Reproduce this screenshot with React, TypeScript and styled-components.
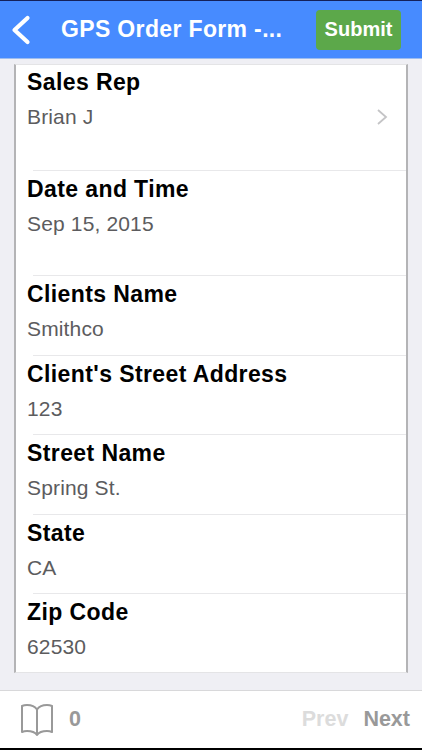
import styled, { createGlobalStyle } from 'styled-components';

const GlobalStyle = createGlobalStyle`
    html, body {
        margin: 0;
        padding: 0;
        background: #000;
    }
    body {
        font-family: "Liberation Sans", Arial, sans-serif;
    }
`;

const fields = [
    { label: 'Sales Rep', value: 'Brian J', tall: true, arrow: true },
    { label: 'Date and Time', value: 'Sep 15, 2015', tall: true },
    { label: 'Clients Name', value: 'Smithco' },
    { label: "Client's Street Address", value: '123' },
    { label: 'Street Name', value: 'Spring St.' },
    { label: 'State', value: 'CA' },
    { label: 'Zip Code', value: '62530' },
];

export default function App() {
    return (
        <Screen>
            <GlobalStyle />
            <TopEdge />
            <Header>
                <BackButton aria-label="Back">
                    <svg width="20" height="30" viewBox="0 0 20 30" fill="none">
                        <path d="M16.5 3 L3.5 15 L16.5 27" stroke="#fff" strokeWidth="4.2" strokeLinecap="round" strokeLinejoin="round" />
                    </svg>
                </BackButton>
                <Title>GPS Order Form -...</Title>
                <SubmitButton>Submit</SubmitButton>
            </Header>
            <Content>
                <Card>
                    {fields.map((field, index) => (
                        <Field key={field.label} $tall={field.tall} $first={index === 0}>
                            <Label>{field.label}</Label>
                            <ValueRow>
                                <Value>{field.value}</Value>
                                {field.arrow && (
                                    <svg width="12" height="18" viewBox="0 0 12 18" fill="none">
                                        <path d="M2 2 L10 9 L2 16" stroke="#c4c4c6" strokeWidth="1.8" />
                                    </svg>
                                )}
                            </ValueRow>
                        </Field>
                    ))}
                </Card>
            </Content>
            <Footer>
                <Counter>
                    <svg width="34" height="32" viewBox="0 0 34 32" fill="none">
                        <path
                            d="M17 5.5 C15 2.5 11 1 7 1 C5 1 3.5 1.3 2 2 V28 C3.5 27.3 5 27 7 27 C11 27 15 28 17 31 C19 28 23 27 27 27 C29 27 30.5 27.3 32 28 V2 C30.5 1.3 29 1 27 1 C23 1 19 2.5 17 5.5 Z M17 5.5 V31"
                            stroke="#999"
                            strokeWidth="2"
                            strokeLinejoin="round"
                        />
                    </svg>
                    <Count>0</Count>
                </Counter>
                <Pager>
                    <PageLink $disabled>Prev</PageLink>
                    <PageLink>Next</PageLink>
                </Pager>
            </Footer>
        </Screen>
    );
}

const Screen = styled.div`
    width: 422px;
    height: 750px;
    display: flex;
    flex-direction: column;
    overflow: hidden;
    background: #efeff4;
`;

const TopEdge = styled.div`
    height: 1px;
    flex-shrink: 0;
    background: #14205a;
`;

const Header = styled.header`
    height: 58px;
    flex-shrink: 0;
    display: flex;
    align-items: center;
    padding: 0 21px 0 11px;
    background: #478bff;
    border-bottom: 1px solid #9dbdf0;
    box-sizing: border-box;
`;

const BackButton = styled.div`
    width: 20px;
    height: 30px;
    display: flex;
    margin-right: 30px;
`;

const Title = styled.div`
    flex: 1;
    color: #fff;
    font-size: 23px;
    font-weight: 700;
    letter-spacing: 0.35px;
    white-space: nowrap;
`;

const SubmitButton = styled.div`
    width: 85px;
    height: 40px;
    display: flex;
    align-items: center;
    justify-content: center;
    background: #5ca84a;
    border-radius: 4px;
    color: #fff;
    font-size: 20px;
    font-weight: 700;
`;

const Content = styled.main`
    flex: 1;
    padding: 5px 14px 17px;
    min-height: 0;
    display: flex;
`;

const Card = styled.div`
    flex: 1;
    background: #fff;
    border-left: 2px solid #b4b4b6;
    border-right: 2px solid #b4b4b6;
    border-top: 1px solid #e4e4e6;
    border-bottom: 1px solid #e4e4e6;
    padding-left: 11px;
`;

const Field = styled.div<{ $tall?: boolean; $first?: boolean }>`
    height: ${(props) => (props.$first ? '105px' : props.$tall ? '105.4px' : '79.4px')};
    box-sizing: border-box;
    padding-top: ${(props) => (props.$first ? '3px' : '4px')};
    border-top: ${(props) => (props.$first ? 'none' : '1px solid #e8e8ea')};
    margin-left: ${(props) => (props.$first ? '0' : '6px')};
    & > * {
        margin-left: ${(props) => (props.$first ? '0' : '-6px')};
    }
`;

const Label = styled.div`
    color: #000;
    font-size: 23px;
    font-weight: 700;
    letter-spacing: 0.4px;
    line-height: 28px;
`;

const ValueRow = styled.div`
    height: 28px;
    margin-top: 7px;
    display: flex;
    align-items: center;
    justify-content: space-between;
    padding-right: 18px;
`;

const Value = styled.div`
    color: #5c5c5e;
    font-size: 21px;
    letter-spacing: 0.15px;
    line-height: 28px;
`;

const Footer = styled.footer`
    height: 60px;
    flex-shrink: 0;
    display: flex;
    align-items: center;
    justify-content: space-between;
    padding: 0 12px 0 20px;
    background: #fff;
    border-top: 1px solid #d8d8da;
    border-bottom: 2px solid #000;
    box-sizing: border-box;
`;

const Counter = styled.div`
    display: flex;
    align-items: center;
    gap: 15px;
`;

const Count = styled.span`
    color: #999;
    font-size: 21.5px;
    font-weight: 700;
`;

const Pager = styled.div`
    display: flex;
    gap: 15px;
`;

const PageLink = styled.span<{ $disabled?: boolean }>`
    color: ${(props) => (props.$disabled ? '#dcdcdc' : '#999')};
    font-size: 21.5px;
    font-weight: 700;
`;
